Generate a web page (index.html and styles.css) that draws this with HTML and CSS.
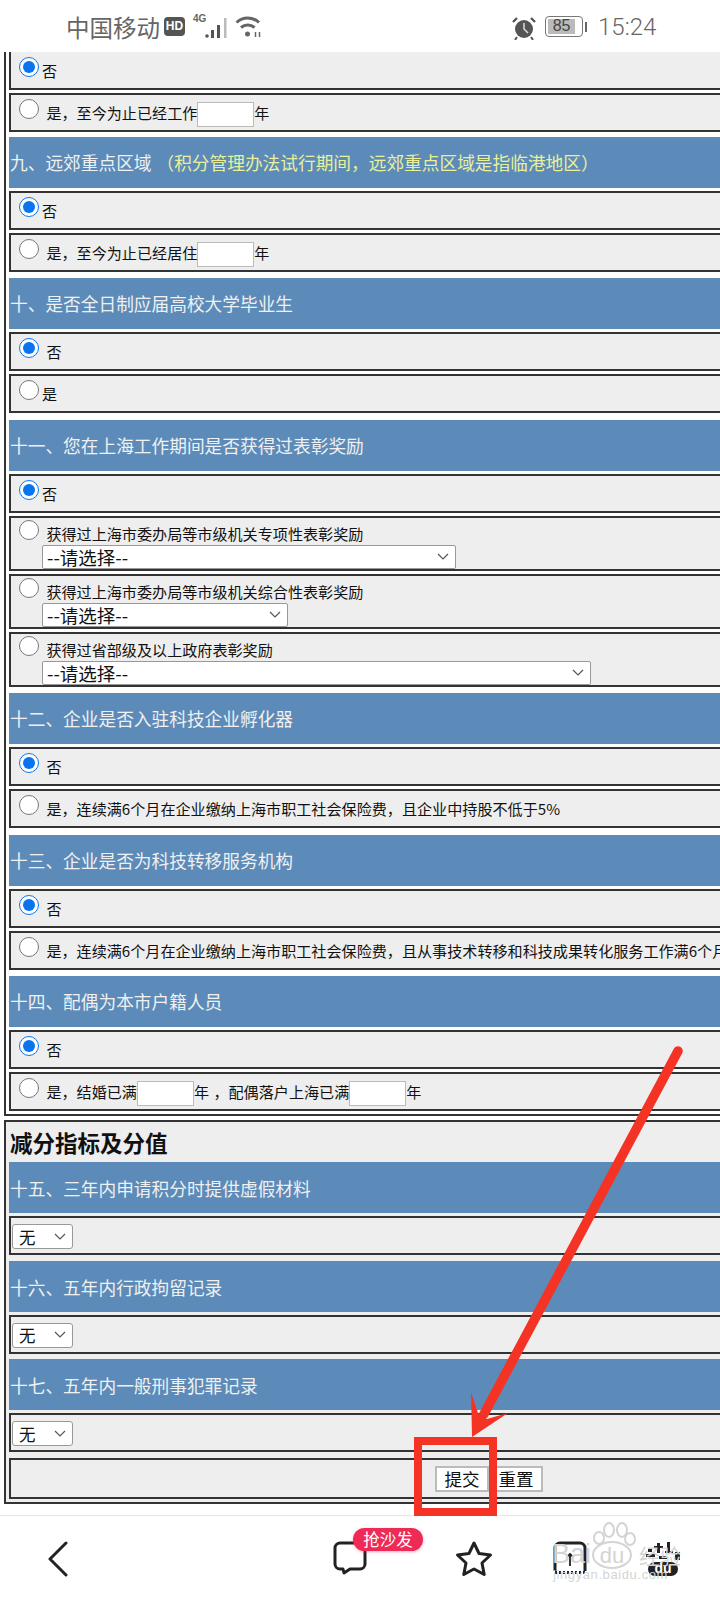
FILE: index.html
```html
<!DOCTYPE html>
<html lang="zh-CN">
<head>
    <meta charset="UTF-8">
    <meta name="viewport" content="width=device-width, initial-scale=1.0">
    <title>积分模拟</title>
    <link rel="stylesheet" href="styles.css">
</head>
<body>
    <div class="screen">
        <div class="status">
            <span class="carrier">中国移动</span>
            <span class="hd">HD</span>
            <span class="net">4G</span>
            <svg class="signal" width="23" height="24" viewBox="0 0 23 24"><circle cx="2" cy="21" r="1.800" fill="#555"/><path d="M6 15h3v8H6zM12 10h3v13h-3z" fill="#555"/><path d="M19 3h2.500v20H19z" fill="#bbb"/></svg>
            <svg class="wifi" width="27" height="24" viewBox="0 0 27 24" fill="none" stroke="#666" stroke-width="3"><path d="M1.500 7.500c6.500-6 16-6 22.500 0M6 12.500c4-3.500 9.500-3.500 13.500 0"/><circle cx="12.500" cy="19" r="2.500" fill="#666" stroke="none"/><path d="M20.500 17v5M24.500 17v5" stroke-width="1.500"/></svg>
            <span class="spacer"></span>
            <svg class="alarm" width="24" height="24" viewBox="0 0 24 24"><circle cx="12" cy="13" r="9" fill="#555"/><path d="M12 7v6l4 4" fill="none" stroke="#ddd" stroke-width="1.500"/><path d="M1 6l4-4M23 6l-4-4" stroke="#555" stroke-width="2.400"/><path d="M5 21l-2 3M19 21l2 3" stroke="#555" stroke-width="2"/></svg>
            <span class="battery"><span class="level">85</span></span>
            <span class="nub"></span>
            <span class="clock">15:24</span>
        </div>

        <div class="form-box first">
            <div class="row cut"><label><input type="radio" name="r8" checked>否</label></div>
            <div class="row"><label><input type="radio" name="r8"> 是，至今为止已经工作<input type="text" class="num">年</label></div>

            <div class="head near">九、远郊重点区域 <span class="note">（积分管理办法试行期间，远郊重点区域是指临港地区）</span></div>
            <div class="row"><label><input type="radio" name="r9" checked>否</label></div>
            <div class="row"><label><input type="radio" name="r9"> 是，至今为止已经居住<input type="text" class="num">年</label></div>

            <div class="head">十、是否全日制应届高校大学毕业生</div>
            <div class="row"><label><input type="radio" name="r10" checked> 否</label></div>
            <div class="row"><label><input type="radio" name="r10">是</label></div>

            <div class="head">十一、您在上海工作期间是否获得过表彰奖励</div>
            <div class="row"><label><input type="radio" name="r11" checked>否</label></div>
            <div class="row tall">
                <label><input type="radio" name="r11"> 获得过上海市委办局等市级机关专项性表彰奖励</label>
                <select class="pick w-long"><option>--请选择--</option></select>
            </div>
            <div class="row tall">
                <label><input type="radio" name="r11"> 获得过上海市委办局等市级机关综合性表彰奖励</label>
                <select class="pick w-short"><option>--请选择--</option></select>
            </div>
            <div class="row tall">
                <label><input type="radio" name="r11"> 获得过省部级及以上政府表彰奖励</label>
                <select class="pick w-wide"><option>--请选择--</option></select>
            </div>

            <div class="head">十二、企业是否入驻科技企业孵化器</div>
            <div class="row"><label><input type="radio" name="r12" checked> 否</label></div>
            <div class="row"><label><input type="radio" name="r12"> 是，连续满6个月在企业缴纳上海市职工社会保险费，且企业中持股不低于5%</label></div>

            <div class="head">十三、企业是否为科技转移服务机构</div>
            <div class="row"><label><input type="radio" name="r13" checked> 否</label></div>
            <div class="row"><label><input type="radio" name="r13"> 是，连续满6个月在企业缴纳上海市职工社会保险费，且从事技术转移和科技成果转化服务工作满6个月</label></div>

            <div class="head">十四、配偶为本市户籍人员</div>
            <div class="row"><label><input type="radio" name="r14" checked> 否</label></div>
            <div class="row"><label><input type="radio" name="r14"> 是，结婚已满<input type="text" class="num">年 ，配偶落户上海已满<input type="text" class="num">年</label></div>
        </div>

        <div class="form-box second">
            <h2>减分指标及分值</h2>
            <div class="head top">十五、三年内申请积分时提供虚假材料</div>
            <div class="row"><select class="pick-small"><option>无</option></select></div>
            <div class="head">十六、五年内行政拘留记录</div>
            <div class="row"><select class="pick-small"><option>无</option></select></div>
            <div class="head">十七、五年内一般刑事犯罪记录</div>
            <div class="row"><select class="pick-small"><option>无</option></select></div>
            <div class="row actions">
                <button type="button">提交</button><button type="button">重置</button>
            </div>
        </div>

        <div class="nav">
            <svg width="20" height="36" viewBox="0 0 20 36" fill="none" stroke="#222" stroke-width="3" stroke-linecap="round" stroke-linejoin="round"><path d="M18 2L2 18l16 16"/></svg>
            <div class="comment">
                <svg width="34" height="34" viewBox="0 0 34 34" fill="none" stroke="#222" stroke-width="3" stroke-linejoin="round"><path d="M7 2h20a5 5 0 0 1 5 5v16a5 5 0 0 1-5 5H17l-6 4-1-4H7a5 5 0 0 1-5-5V7a5 5 0 0 1 5-5z"/></svg>
                <span class="badge">抢沙发</span>
            </div>
            <svg width="38" height="38" viewBox="0 0 38 38" fill="none" stroke="#222" stroke-width="3" stroke-linejoin="round"><path d="M19 3l5 10.500 11.500 1.500-8.500 8 2.200 11.500L19 29l-10.200 5.500L11 23l-8.500-8L14 13.500z"/></svg>
            <svg class="box-icon" width="34" height="34" viewBox="0 0 34 34" fill="none" stroke="#222" stroke-width="3"><path d="M2 30V7a5 5 0 0 1 5-5h20a5 5 0 0 1 5 5v23"/><path d="M2 31.500h30" stroke-dasharray="2 2"/><path d="M17 13v12M14 16l3-3 3 3" stroke-width="1.800"/></svg>
            <svg class="du-icon" width="36" height="36" viewBox="0 0 36 36"><g fill="#222"><rect x="1" y="13" width="9" height="3"/><rect x="3" y="8" width="4" height="3"/><rect x="12" y="2" width="3" height="10"/><rect x="9" y="5" width="9" height="2"/><rect x="22" y="1" width="3" height="11"/><rect x="20" y="10" width="8" height="2"/><rect x="30" y="11" width="5" height="8"/><rect x="14" y="15" width="8" height="3"/><rect x="3" y="21" width="30" height="14" rx="7"/></g><text x="18" y="32" class="du">du</text></svg>
        </div>

        <!-- red marks and watermark drawn on top of the screenshot -->
        <svg class="marks" width="720" height="1600" viewBox="0 0 720 1600">
            <g class="wm">
                <text x="552" y="1563" class="wm-big">Bai</text>
                <text x="612" y="1563" class="wm-du">du</text>
                <text x="639" y="1564" class="wm-cn">经验</text>
                <text x="553" y="1579" class="wm-url">jingyan.baidu.com</text>
                <g fill="none" stroke="#d4d4d4" stroke-width="2"><ellipse cx="612" cy="1555" rx="19" ry="13"/><ellipse cx="609" cy="1530" rx="5" ry="7"/><ellipse cx="622" cy="1530" rx="5" ry="7"/><ellipse cx="599" cy="1538" rx="5" ry="6"/><ellipse cx="630" cy="1539" rx="5" ry="6"/></g>
            </g>
            <rect x="418" y="1441" width="75" height="71" fill="none" stroke="#f53324" stroke-width="8"/>
            <line x1="678" y1="1051" x2="484" y2="1414" stroke="#f53324" stroke-width="9.500" stroke-linecap="round"/>
            <polygon points="471,1392 478,1413 487,1419 508,1413 472,1437" fill="#f53324"/>
        </svg>
    </div>
</body>
</html>
```

FILE: styles.css
```css
* {
    box-sizing: border-box;
}
body {
    margin: 0;
    font-family: "Noto Sans CJK SC", "Liberation Sans", sans-serif;
    background-color: #fff;
}
.screen {
    position: relative;
    width: 720px;
    height: 1600px;
    overflow: hidden;
    display: flex;
    flex-direction: column;
}

/* status bar */
.status {
    height: 52px;
    flex: none;
    display: flex;
    align-items: center;
    padding: 1px 64px 0 66px;
    color: #666;
    background-color: #fff;
}
.carrier {
    font-size: 23.500px;
    width: 98px;
    white-space: nowrap;
}
.hd {
    width: 21px;
    height: 19px;
    background-color: #555;
    border-radius: 4px;
    color: #fff;
    font-family: "Liberation Sans", sans-serif;
    font-size: 12px;
    font-weight: bold;
    line-height: 19px;
    text-align: center;
}
.net {
    font-family: "Liberation Sans", sans-serif;
    font-size: 10px;
    font-weight: bold;
    width: 20px;
    margin: -16px -8px 0 8px;
}
.signal {
    margin-top: 1px;
}
.wifi {
    margin: 1px 0 0 7px;
}
.spacer {
    flex: 1;
}
.alarm {
    margin-top: 2px;
}
.battery {
    width: 38px;
    height: 21px;
    margin-left: 9px;
    padding: 2px;
    border: 1.500px solid #777;
    border-radius: 4px;
}
.level {
    display: block;
    width: 85%;
    height: 100%;
    background-color: #bbb;
    color: #444;
    font-family: "Liberation Sans", sans-serif;
    font-size: 16px;
    line-height: 14px;
    text-align: center;
}
.nub {
    width: 2px;
    height: 10px;
    margin: 0 11px 0 2px;
    background-color: #666;
}
.clock {
    font-family: "Roboto", sans-serif;
    font-size: 24px;
    font-weight: 300;
    width: 58px;
    white-space: nowrap;
}

/* form tables */
.form-box {
    width: 780px;
    margin-left: 4px;
    padding: 0 3px 3px;
    border: 2px solid #333;
    background-color: #fff;
    display: flex;
    flex-direction: column;
    gap: 3px;
    flex: none;
}
.form-box.first {
    border-top: none;
}
.form-box.second {
    margin-top: 4px;
    background-color: #eee;
}
.row {
    height: 39px;
    padding: 2px 8px;
    border: 2px solid #333;
    background-color: #eee;
    font-size: 15.100px;
    color: #111;
    white-space: nowrap;
    word-spacing: 1px;
}
.row.cut {
    height: 38px;
    padding-top: 3px;
    border-top: none;
}
.row.tall {
    height: 55px;
    padding-top: 0;
}
.row input[type="radio"] {
    width: 20px;
    height: 20px;
    margin: 2px 3px 0 0;
    accent-color: #0a74ee;
}
.head {
    height: 51px;
    margin-top: 3.500px;
    padding: 0 0 0 1px;
    background-color: #5c8bb9;
    color: #f0f0f0;
    font-size: 17.700px;
    line-height: 51px;
    white-space: nowrap;
}
.head.near {
    margin-top: 1.500px;
}
.head.top {
    margin-top: 0;
}
.second .head {
    margin-top: 2.500px;
    line-height: 52px;
}
.second .head.top {
    margin-top: 0;
}
.note {
    color: #e8f09a;
    margin-left: 1px;
}
.num {
    width: 57px;
    height: 25px;
    padding: 0 2px;
    border: 1.500px solid #bbb;
    background-color: #fff;
    vertical-align: middle;
}
.pick {
    appearance: none;
    display: block;
    height: 24px;
    margin: 1px 0 0 23px;
    padding: 0 0 0 4px;
    border: 1.500px solid #999;
    border-radius: 2px;
    background: #fff url("data:image/svg+xml,%3Csvg xmlns='http://www.w3.org/2000/svg' width='12' height='8'%3E%3Cpath d='M1 1l5 5 5-5' fill='none' stroke='%23555' stroke-width='1.200'/%3E%3C/svg%3E") no-repeat right 6px center;
    color: #111;
    font-family: inherit;
    font-size: 18.500px;
    line-height: 20px;
}
.w-long {
    width: 414px;
}
.w-short {
    width: 246px;
}
.w-wide {
    width: 549px;
}
.pick-small {
    appearance: none;
    width: 61px;
    height: 25px;
    margin: 4px 0 0 -7px;
    padding: 0 0 0 6px;
    border: 1.500px solid #999;
    border-radius: 3px;
    background: #fff url("data:image/svg+xml,%3Csvg xmlns='http://www.w3.org/2000/svg' width='12' height='8'%3E%3Cpath d='M1 1l5 5 5-5' fill='none' stroke='%23555' stroke-width='1.200'/%3E%3C/svg%3E") no-repeat right 6px center;
    color: #111;
    font-family: inherit;
    font-size: 16.500px;
    line-height: 20px;
}
.actions.row {
    height: 41px;
    margin-top: 3px;
    padding: 6px 0 0 424px;
    display: flex;
}
.actions button {
    width: 54px;
    height: 26px;
    padding: 0;
    border: 2px solid #bbb;
    background-color: #fff;
    font-family: inherit;
    font-size: 17.500px;
    line-height: 20px;
    color: #111;
}
h2 {
    margin: 0;
    height: 37px;
    padding-left: 1px;
    font-size: 22.500px;
    line-height: 40px;
    color: #111;
}

/* bottom bar */
.nav {
    position: absolute;
    left: 0;
    right: 0;
    top: 1515px;
    bottom: 0;
    border-top: 1px solid #e6e6e6;
    background-color: #fff;
    display: grid;
    grid-template-columns: 48px 20px 265px 34px 88px 38px 60px 34px 58px 36px;
    grid-template-areas: ". back . comment . star . box . du";
    padding-top: 25px;
    align-items: start;
}
.nav > :nth-child(1) { grid-area: back; }
.nav > :nth-child(2) { grid-area: comment; }
.nav > :nth-child(3) { grid-area: star; margin-top: -1px; }
.nav > :nth-child(4) { grid-area: box; }
.nav > :nth-child(5) { grid-area: du; }
.comment {
    position: relative;
}
.badge {
    position: absolute;
    left: 20px;
    top: -13px;
    width: 70px;
    height: 23px;
    border-radius: 12px;
    background-color: #ee2a57;
    box-shadow: 0 1px 3px rgba(238, 42, 87, 0.4);
    color: #fff;
    font-size: 16.500px;
    line-height: 22px;
    text-align: center;
    white-space: nowrap;
}
.du {
    fill: #fff;
    font-family: "Liberation Sans", sans-serif;
    font-size: 14px;
    font-weight: bold;
    text-anchor: middle;
}

/* overlay */
.marks {
    position: absolute;
    left: 0;
    top: 0;
    pointer-events: none;
}
.wm text {
    fill: #d4d4d4;
    font-family: "Liberation Sans", sans-serif;
}
.wm-big {
    font-size: 27px;
}
.wm .wm-du {
    font-size: 22px;
    text-anchor: middle;
}
.wm .wm-cn {
    font-family: "Noto Sans CJK SC", sans-serif;
    font-size: 21px;
}
.wm-url {
    font-size: 13px;
    letter-spacing: 0.600px;
}
```
